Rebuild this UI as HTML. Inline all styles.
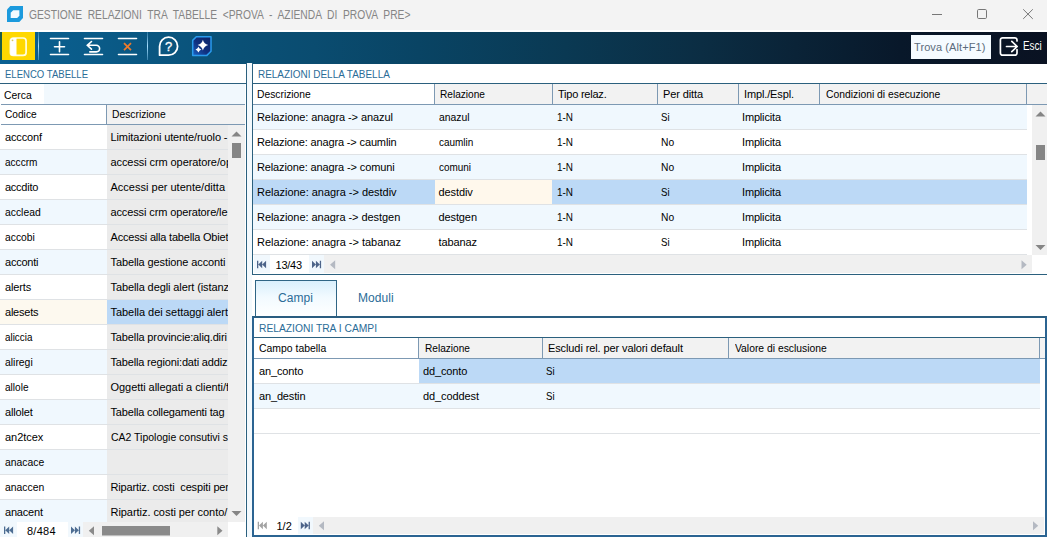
<!DOCTYPE html>
<html lang="it"><head><meta charset="utf-8"><title>GESTIONE RELAZIONI TRA TABELLE</title>
<style>
*{box-sizing:border-box;margin:0;padding:0}
html,body{width:1047px;height:537px;overflow:hidden;background:#fff}
body{position:relative;font-family:"Liberation Sans",sans-serif;font-size:11px;color:#000}
.a{position:absolute}
.t{position:absolute;white-space:pre;line-height:14px;height:14px;overflow:visible}
.hd{color:#2a6c97}
.c{position:absolute;overflow:hidden}
</style></head><body>

<div class="a" style="left:0px;top:0px;width:1047px;height:30px;background:#f3f3f3;"></div>
<svg class="a" style="left:0;top:0" width="30" height="30" viewBox="0 0 30 30"><path d="M10.3 6H23V18L19.300 22H7V9.600Z" fill="#1b9add"/><path d="M13.200 10.200H19.400V15.700L17.200 17.900H10.700V12.700Z" fill="#f2fbff"/></svg>
<div class="t " id="ttl" style="left:29px;top:7px;font-size:12px;line-height:16px;height:16px;color:#858585;transform:scaleX(0.855);transform-origin:0 0;word-spacing:3.3px">GESTIONE RELAZIONI TRA TABELLE &lt;PROVA - AZIENDA DI PROVA PRE&gt;</div>
<svg class="a" style="left:925px;top:4px" width="115" height="20" viewBox="0 0 115 20"><g stroke="#777" stroke-width="1" fill="none"><path d="M7 10.5H17"/><rect x="52.5" y="5.5" width="9" height="9" rx="1.2"/><path d="M98.200 5.300L107.800 14.900M107.800 5.300L98.200 14.900"/></g></svg>
<div class="a" style="left:0px;top:32px;width:1047px;height:32px;background:linear-gradient(to right,rgb(10,96,146) 0%,rgb(10,92,138) 8%,rgb(10,86,128) 15%,rgb(10,80,118) 23%,rgb(10,76,112) 30%,rgb(9,68,100) 40%,rgb(10,57,83) 54%,rgb(11,45,67) 67%,rgb(10,35,55) 76%,rgb(8,24,42) 86%,rgb(10,18,34) 100%);"></div>
<div class="a" style="left:0px;top:32px;width:2px;height:28px;background:#1d5c4a;"></div>
<div class="a" style="left:1.5px;top:32px;width:33px;height:28px;background:#ffd800;"></div>
<svg class="a" style="left:0;top:32px" width="230" height="32" viewBox="0 0 230 32">
<rect x="10.400" y="6" width="15.700" height="17.400" rx="3" fill="none" stroke="#fffde0" stroke-width="1.700"/>
<path d="M10.5 8.5a2.5 2.5 0 0 1 2.5-2.5H16.5V23.5H13a2.5 2.5 0 0 1-2.5-2.5Z" fill="#fff"/>
<circle cx="12.500" cy="8.300" r="0.900" fill="#d9c75a"/>
<defs><linearGradient id="sg" x1="0" y1="0" x2="0" y2="1"><stop offset="0" stop-color="#8fd2fb" stop-opacity="0.25"/><stop offset="0.5" stop-color="#a8e0ff" stop-opacity="1"/><stop offset="1" stop-color="#8fd2fb" stop-opacity="0.35"/></linearGradient></defs><rect x="38" y="0" width="1" height="28" fill="url(#sg)"/><rect x="147" y="0" width="1" height="28" fill="url(#sg)"/>
<g stroke="#fff" stroke-width="1.600" fill="none" stroke-linecap="round">
<path d="M50.5 6.5H68.5M50.5 22.5H68.5M54.5 14.7H64.5M59.5 9.7V19.7"/>
<path d="M84.5 6.5H102.5M84.5 22.5H102.5"/>
<path d="M91.500 9.500L87.300 13.300L91.500 17.100M87.600 13.300H96.300a3.300 3.300 0 0 1 0 6.600H89.800"/>
<path d="M118.5 6.5H136.5M118.5 22.5H136.5"/>
</g>
<path d="M124 11.200L131 18.200M131 11.200L124 18.200" stroke="#ee7a2c" stroke-width="1.700" fill="none"/>
<path d="M159.600 23.200V14.200a9 9 0 1 1 9 9Z" fill="none" stroke="#fff" stroke-width="1.800" stroke-linejoin="round"/>
<text x="168.6" y="19" text-anchor="middle" font-family="Liberation Sans, sans-serif" font-size="13" fill="#fff" stroke="#fff" stroke-width="0.300">?</text>
<linearGradient id="ng" x1="1" y1="0" x2="0" y2="1"><stop offset="0" stop-color="#0d2468"/><stop offset="0.55" stop-color="#10307f"/><stop offset="1" stop-color="#1b63c4"/></linearGradient><path d="M196.300 4.800H211V19.300L206.900 23.400H192.700V8.400Z" fill="url(#ng)" stroke="#2a9bee" stroke-width="1.500" stroke-linejoin="round"/>
<path d="M202.9 7.80Q204.0 12.0 208.20 13.1Q204.0 14.2 202.9 18.40Q201.8 14.2 197.60 13.1Q201.8 12.0 202.9 7.80Z" fill="#fff"/>
<path d="M198.4 14.70Q199.20000000000002 16.8 201.30 17.6Q199.20000000000002 18.400000000000002 198.4 20.50Q197.6 18.400000000000002 195.50 17.6Q197.6 16.8 198.4 14.70Z" fill="#fff"/>
</svg>
<div class="a" style="left:911px;top:35px;width:80px;height:24px;background:#f5fbff;"></div>
<div class="t " id="trova" style="left:914px;top:40px;letter-spacing:0.093px;color:#5b6b7c">Trova (Alt+F1)</div>
<svg class="a" style="left:996px;top:34px" width="26" height="26" viewBox="0 0 26 26"><g fill="none" stroke="#fff" stroke-width="1.700" stroke-linecap="round" stroke-linejoin="round"><path d="M21 7V6a2.200 2.200 0 0 0-2.200-2.200H6.600A2.200 2.200 0 0 0 4.400 6V19a2.200 2.200 0 0 0 2.200 2.200H18.800A2.200 2.200 0 0 0 21 19V15.500"/><path d="M10.500 12.500H20.800M15.800 7.300L21.200 12.500L15.800 17.700"/></g></svg>
<div class="t " id="esci" style="left:1023px;top:39px;transform:scaleX(0.8249);transform-origin:0 0;font-size:12px;color:#fff">Esci</div>
<div class="a" style="left:0px;top:64px;width:246px;height:473px;background:#fff;"></div>
<div class="t hd" id="lh" style="left:5px;top:67px;transform:scaleX(0.8684);transform-origin:0 0;">ELENCO TABELLE</div>
<div class="a" style="left:0px;top:83px;width:246px;height:1px;background:#2b607e;"></div>
<div class="a" style="left:0px;top:84px;width:245px;height:20px;background:#f1f8fd;"></div>
<div class="a" style="left:0px;top:84px;width:44px;height:20px;background:#fff;"></div>
<div class="t " id="cerca" style="left:4px;top:88px;transform:scaleX(0.9440);transform-origin:0 0;">Cerca</div>
<div class="a" style="left:1px;top:104px;width:244px;height:1px;background:#7d99b3;"></div>
<div class="a" style="left:2px;top:105px;width:104px;height:19px;background:#fff;"></div>
<div class="a" style="left:107px;top:105px;width:138px;height:19px;background:#f2f2f2;"></div>
<div class="a" style="left:106px;top:105px;width:1px;height:19px;background:#7d99b3;"></div>
<div class="a" style="left:1px;top:124px;width:244px;height:1px;background:#7d99b3;"></div>
<div class="t " style="left:5px;top:107px;transform:scaleX(0.9229);transform-origin:0 0;">Codice</div>
<div class="t " style="left:112px;top:107px;transform:scaleX(0.9362);transform-origin:0 0;">Descrizione</div>
<div class="a" style="left:0px;top:125px;width:107px;height:24px;background:#fff;"></div>
<div class="a" style="left:107px;top:125px;width:121px;height:24px;background:#ebebeb;"></div>
<div class="a" style="left:0px;top:149px;width:228px;height:1px;background:#dfe2e5;"></div>
<div class="t " style="left:5px;top:130px;letter-spacing:-0.135px;">accconf</div>
<div class="c" style="left:107px;top:125px;width:121px;height:24px">
<div class="t " style="left:3.5px;top:5px;letter-spacing:-0.114px;">Limitazioni utente/ruolo -</div>
</div>
<div class="a" style="left:0px;top:150px;width:107px;height:24px;background:#f0f8fe;"></div>
<div class="a" style="left:107px;top:150px;width:121px;height:24px;background:#ebebeb;"></div>
<div class="a" style="left:0px;top:174px;width:228px;height:1px;background:#dfe2e5;"></div>
<div class="t " style="left:5px;top:155px;transform:scaleX(0.9141);transform-origin:0 0;">acccrm</div>
<div class="c" style="left:107px;top:150px;width:121px;height:24px">
<div class="t " style="left:3.5px;top:5px;letter-spacing:-0.087px;">accessi crm operatore/op</div>
</div>
<div class="a" style="left:0px;top:175px;width:107px;height:24px;background:#fff;"></div>
<div class="a" style="left:107px;top:175px;width:121px;height:24px;background:#ebebeb;"></div>
<div class="a" style="left:0px;top:199px;width:228px;height:1px;background:#dfe2e5;"></div>
<div class="t " style="left:5px;top:180px;letter-spacing:-0.259px;">accdito</div>
<div class="c" style="left:107px;top:175px;width:121px;height:24px">
<div class="t " style="left:3.5px;top:5px;letter-spacing:0.007px;">Accessi per utente/ditta</div>
</div>
<div class="a" style="left:0px;top:200px;width:107px;height:24px;background:#f0f8fe;"></div>
<div class="a" style="left:107px;top:200px;width:121px;height:24px;background:#ebebeb;"></div>
<div class="a" style="left:0px;top:224px;width:228px;height:1px;background:#dfe2e5;"></div>
<div class="t " style="left:5px;top:205px;transform:scaleX(0.9416);transform-origin:0 0;">acclead</div>
<div class="c" style="left:107px;top:200px;width:121px;height:24px">
<div class="t " style="left:3.5px;top:5px;letter-spacing:-0.123px;">accessi crm operatore/le</div>
</div>
<div class="a" style="left:0px;top:225px;width:107px;height:24px;background:#fff;"></div>
<div class="a" style="left:107px;top:225px;width:121px;height:24px;background:#ebebeb;"></div>
<div class="a" style="left:0px;top:249px;width:228px;height:1px;background:#dfe2e5;"></div>
<div class="t " style="left:5px;top:230px;transform:scaleX(0.9372);transform-origin:0 0;">accobi</div>
<div class="c" style="left:107px;top:225px;width:121px;height:24px">
<div class="t " style="left:3.5px;top:5px;letter-spacing:-0.196px;">Accessi alla tabella Obiet</div>
</div>
<div class="a" style="left:0px;top:250px;width:107px;height:24px;background:#f0f8fe;"></div>
<div class="a" style="left:107px;top:250px;width:121px;height:24px;background:#ebebeb;"></div>
<div class="a" style="left:0px;top:274px;width:228px;height:1px;background:#dfe2e5;"></div>
<div class="t " style="left:5px;top:255px;letter-spacing:-0.226px;">acconti</div>
<div class="c" style="left:107px;top:250px;width:121px;height:24px">
<div class="t " style="left:3.5px;top:5px;letter-spacing:-0.105px;">Tabella gestione acconti</div>
</div>
<div class="a" style="left:0px;top:275px;width:107px;height:24px;background:#fff;"></div>
<div class="a" style="left:107px;top:275px;width:121px;height:24px;background:#ebebeb;"></div>
<div class="a" style="left:0px;top:299px;width:228px;height:1px;background:#dfe2e5;"></div>
<div class="t " style="left:5px;top:280px;letter-spacing:-0.12px;">alerts</div>
<div class="c" style="left:107px;top:275px;width:121px;height:24px">
<div class="t " style="left:3.5px;top:5px;letter-spacing:-0.099px;">Tabella degli alert (istanz</div>
</div>
<div class="a" style="left:0px;top:300px;width:107px;height:24px;background:#fdf9ef;"></div>
<div class="a" style="left:107px;top:300px;width:121px;height:24px;background:#bcd9f6;"></div>
<div class="a" style="left:0px;top:324px;width:228px;height:1px;background:#dfe2e5;"></div>
<div class="t " style="left:5px;top:305px;letter-spacing:-0.226px;">alesets</div>
<div class="c" style="left:107px;top:300px;width:121px;height:24px">
<div class="t " style="left:3.5px;top:5px;letter-spacing:-0.045px;">Tabella dei settaggi alert</div>
</div>
<div class="a" style="left:0px;top:325px;width:107px;height:24px;background:#fff;"></div>
<div class="a" style="left:107px;top:325px;width:121px;height:24px;background:#ebebeb;"></div>
<div class="a" style="left:0px;top:349px;width:228px;height:1px;background:#dfe2e5;"></div>
<div class="t " style="left:5px;top:330px;transform:scaleX(0.8964);transform-origin:0 0;">aliccia</div>
<div class="c" style="left:107px;top:325px;width:121px;height:24px">
<div class="t " style="left:3.5px;top:5px;letter-spacing:-0.132px;">Tabella provincie:aliq.diri</div>
</div>
<div class="a" style="left:0px;top:350px;width:107px;height:24px;background:#f0f8fe;"></div>
<div class="a" style="left:107px;top:350px;width:121px;height:24px;background:#ebebeb;"></div>
<div class="a" style="left:0px;top:374px;width:228px;height:1px;background:#dfe2e5;"></div>
<div class="t " style="left:5px;top:355px;transform:scaleX(0.9439);transform-origin:0 0;">aliregi</div>
<div class="c" style="left:107px;top:350px;width:121px;height:24px">
<div class="t " style="left:3.5px;top:5px;letter-spacing:-0.163px;">Tabella regioni:dati addiz</div>
</div>
<div class="a" style="left:0px;top:375px;width:107px;height:24px;background:#fff;"></div>
<div class="a" style="left:107px;top:375px;width:121px;height:24px;background:#ebebeb;"></div>
<div class="a" style="left:0px;top:399px;width:228px;height:1px;background:#dfe2e5;"></div>
<div class="t " style="left:5px;top:380px;transform:scaleX(0.9149);transform-origin:0 0;">allole</div>
<div class="c" style="left:107px;top:375px;width:121px;height:24px">
<div class="t " style="left:3.5px;top:5px;letter-spacing:-0.05px;">Oggetti allegati a clienti/f</div>
</div>
<div class="a" style="left:0px;top:400px;width:107px;height:24px;background:#f0f8fe;"></div>
<div class="a" style="left:107px;top:400px;width:121px;height:24px;background:#ebebeb;"></div>
<div class="a" style="left:0px;top:424px;width:228px;height:1px;background:#dfe2e5;"></div>
<div class="t " style="left:5px;top:405px;letter-spacing:-0.173px;">allolet</div>
<div class="c" style="left:107px;top:400px;width:121px;height:24px">
<div class="t " style="left:3.5px;top:5px;letter-spacing:-0.17px;">Tabella collegamenti tag</div>
</div>
<div class="a" style="left:0px;top:425px;width:107px;height:24px;background:#fff;"></div>
<div class="a" style="left:107px;top:425px;width:121px;height:24px;background:#ebebeb;"></div>
<div class="a" style="left:0px;top:449px;width:228px;height:1px;background:#dfe2e5;"></div>
<div class="t " style="left:5px;top:430px;letter-spacing:-0.038px;">an2tcex</div>
<div class="c" style="left:107px;top:425px;width:121px;height:24px">
<div class="t " style="left:3.5px;top:5px;transform:scaleX(0.9520);transform-origin:0 0;">CA2 Tipologie consutivi s</div>
</div>
<div class="a" style="left:0px;top:450px;width:107px;height:24px;background:#f0f8fe;"></div>
<div class="a" style="left:107px;top:450px;width:121px;height:24px;background:#ebebeb;"></div>
<div class="a" style="left:0px;top:474px;width:228px;height:1px;background:#dfe2e5;"></div>
<div class="t " style="left:5px;top:455px;transform:scaleX(0.9426);transform-origin:0 0;">anacace</div>
<div class="c" style="left:107px;top:450px;width:121px;height:24px">
<div class="t " style="left:3.5px;top:5px;"></div>
</div>
<div class="a" style="left:0px;top:475px;width:107px;height:24px;background:#fff;"></div>
<div class="a" style="left:107px;top:475px;width:121px;height:24px;background:#ebebeb;"></div>
<div class="a" style="left:0px;top:499px;width:228px;height:1px;background:#dfe2e5;"></div>
<div class="t " style="left:5px;top:480px;transform:scaleX(0.9426);transform-origin:0 0;">anaccen</div>
<div class="c" style="left:107px;top:475px;width:121px;height:24px">
<div class="t " style="left:3.5px;top:5px;letter-spacing:-0.139px;">Ripartiz. costi  cespiti per</div>
</div>
<div class="a" style="left:0px;top:500px;width:107px;height:24px;background:#f0f8fe;"></div>
<div class="a" style="left:107px;top:500px;width:121px;height:24px;background:#ebebeb;"></div>
<div class="a" style="left:0px;top:524px;width:228px;height:1px;background:#dfe2e5;"></div>
<div class="t " style="left:5px;top:505px;letter-spacing:-0.191px;">anacent</div>
<div class="c" style="left:107px;top:500px;width:121px;height:24px">
<div class="t " style="left:3.5px;top:5px;letter-spacing:-0.048px;">Ripartiz. costi per conto/</div>
</div>
<div class="a" style="left:228px;top:125px;width:17px;height:400px;background:#f0f0f0;"></div>
<svg class="a" style="left:228px;top:125px" width="17" height="400" viewBox="0 0 17 400"><path d="M3.5 11.5L8.5 6.5L13.5 11.5Z" fill="#858585"/><rect x="4" y="18" width="9" height="15" fill="#858585"/><path d="M3.5 386L8.500 391L13.5 386Z" fill="#858585"/></svg>
<div class="a" style="left:0px;top:522px;width:228px;height:15px;background:#f0f0f0;"></div>
<div class="a" style="left:228px;top:522px;width:17px;height:15px;background:#fff;"></div>
<div class="a" style="left:0px;top:522px;width:83px;height:15px;background:#f1f8fd;"></div>
<div class="a" style="left:17px;top:522px;width:51px;height:15px;background:#fff;"></div>
<svg class="a" style="left:0;top:0" width="1047" height="537" viewBox="0 0 1047 537"><path d="M4 526.6h1.300v7.500h-1.300zM9.2 526.6v7.500L5.3 530.35zM13.1 526.6v7.500L9.2 530.35z" fill="#4d6d92"/><path d="M78.8 526.6h1.300v7.500h-1.300zM74.9 526.6v7.500L78.8 530.35zM71 526.6v7.500L74.9 530.35z" fill="#4d6d92"/><path d="M94.0 526.3v9L88.8 530.8z" fill="#8a8a8a"/><path d="M217.3 526.3v9L222.5 530.8z" fill="#8a8a8a"/><rect x="102" y="526" width="68" height="9.500" fill="#8a8a8a"/></svg>
<div class="t " id="n1" style="left:27px;top:524px;letter-spacing:0.243px;">8/484</div>
<div class="a" style="left:246px;top:63px;width:1px;height:474px;background:#2b607e;"></div>
<div class="a" style="left:247px;top:63px;width:5px;height:474px;background:#f3f9fd;"></div>
<div class="a" style="left:252px;top:63px;width:1px;height:2px;background:#2b607e;"></div>
<div class="a" style="left:252px;top:64px;width:795px;height:211px;background:#fff;"></div>
<div class="a" style="left:252px;top:64px;width:1px;height:211px;background:#2b607e;"></div>
<div class="t hd" id="rh" style="left:258px;top:67px;transform:scaleX(0.9045);transform-origin:0 0;">RELAZIONI DELLA TABELLA</div>
<div class="a" style="left:253px;top:83px;width:794px;height:1px;background:#2b607e;"></div>
<div class="a" style="left:253px;top:84px;width:182px;height:20px;background:#fff;"></div>
<div class="a" style="left:435px;top:84px;width:592px;height:20px;background:#f2f2f2;"></div>
<div class="a" style="left:1027px;top:84px;width:20px;height:20px;background:#f2f2f2;"></div>
<div class="t " style="left:257px;top:87px;transform:scaleX(0.9362);transform-origin:0 0;">Descrizione</div>
<div class="a" style="left:434px;top:84px;width:1px;height:20px;background:#7d99b3;"></div>
<div class="t " style="left:440px;top:87px;transform:scaleX(0.9199);transform-origin:0 0;">Relazione</div>
<div class="a" style="left:552px;top:84px;width:1px;height:20px;background:#7d99b3;"></div>
<div class="t " style="left:558px;top:87px;letter-spacing:-0.224px;">Tipo relaz.</div>
<div class="a" style="left:657px;top:84px;width:1px;height:20px;background:#7d99b3;"></div>
<div class="t " style="left:663px;top:87px;letter-spacing:-0.108px;">Per ditta</div>
<div class="a" style="left:738px;top:84px;width:1px;height:20px;background:#7d99b3;"></div>
<div class="t " style="left:744px;top:87px;letter-spacing:-0.135px;">Impl./Espl.</div>
<div class="a" style="left:819px;top:84px;width:1px;height:20px;background:#7d99b3;"></div>
<div class="t " style="left:826px;top:87px;transform:scaleX(0.9393);transform-origin:0 0;">Condizioni di esecuzione</div>
<div class="a" style="left:1026px;top:84px;width:1px;height:20px;background:#7d99b3;"></div>
<div class="a" style="left:253px;top:104px;width:794px;height:1px;background:#7d99b3;"></div>
<div class="a" style="left:253px;top:105px;width:774px;height:24px;background:#f0f8fe;"></div>
<div class="a" style="left:253px;top:129px;width:774px;height:1px;background:#dfe2e5;"></div>
<div class="t " style="left:257px;top:110px;letter-spacing:-0.073px;">Relazione: anagra -&gt; anazul</div>
<div class="t " style="left:438.5px;top:110px;transform:scaleX(0.9440);transform-origin:0 0;">anazul</div>
<div class="t " style="left:557px;top:110px;transform:scaleX(0.9027);transform-origin:0 0;">1-N</div>
<div class="t " style="left:661px;top:110px;transform:scaleX(0.8793);transform-origin:0 0;">Si</div>
<div class="t " style="left:742px;top:110px;letter-spacing:-0.168px;">Implicita</div>
<div class="a" style="left:253px;top:130px;width:774px;height:24px;background:#fff;"></div>
<div class="a" style="left:253px;top:154px;width:774px;height:1px;background:#dfe2e5;"></div>
<div class="t " style="left:257px;top:135px;letter-spacing:-0.14px;">Relazione: anagra -&gt; caumlin</div>
<div class="t " style="left:438.5px;top:135px;transform:scaleX(0.9049);transform-origin:0 0;">caumlin</div>
<div class="t " style="left:557px;top:135px;transform:scaleX(0.9027);transform-origin:0 0;">1-N</div>
<div class="t " style="left:661px;top:135px;transform:scaleX(0.9316);transform-origin:0 0;">No</div>
<div class="t " style="left:742px;top:135px;letter-spacing:-0.168px;">Implicita</div>
<div class="a" style="left:253px;top:155px;width:774px;height:24px;background:#f0f8fe;"></div>
<div class="a" style="left:253px;top:179px;width:774px;height:1px;background:#dfe2e5;"></div>
<div class="t " style="left:257px;top:160px;letter-spacing:-0.129px;">Relazione: anagra -&gt; comuni</div>
<div class="t " style="left:438.5px;top:160px;transform:scaleX(0.9024);transform-origin:0 0;">comuni</div>
<div class="t " style="left:557px;top:160px;transform:scaleX(0.9027);transform-origin:0 0;">1-N</div>
<div class="t " style="left:661px;top:160px;transform:scaleX(0.9316);transform-origin:0 0;">No</div>
<div class="t " style="left:742px;top:160px;letter-spacing:-0.168px;">Implicita</div>
<div class="a" style="left:253px;top:180px;width:774px;height:24px;background:#bcd9f6;"></div>
<div class="a" style="left:435px;top:180px;width:117px;height:24px;background:#fff8ec;"></div>
<div class="a" style="left:253px;top:204px;width:774px;height:1px;background:#dfe2e5;"></div>
<div class="t " style="left:257px;top:185px;letter-spacing:-0.027px;">Relazione: anagra -&gt; destdiv</div>
<div class="t " style="left:438.5px;top:185px;letter-spacing:-0.092px;">destdiv</div>
<div class="t " style="left:557px;top:185px;transform:scaleX(0.9027);transform-origin:0 0;">1-N</div>
<div class="t " style="left:661px;top:185px;transform:scaleX(0.8793);transform-origin:0 0;">Si</div>
<div class="t " style="left:742px;top:185px;letter-spacing:-0.168px;">Implicita</div>
<div class="a" style="left:253px;top:205px;width:774px;height:24px;background:#f0f8fe;"></div>
<div class="a" style="left:253px;top:229px;width:774px;height:1px;background:#dfe2e5;"></div>
<div class="t " style="left:257px;top:210px;letter-spacing:-0.049px;">Relazione: anagra -&gt; destgen</div>
<div class="t " style="left:438.5px;top:210px;letter-spacing:-0.107px;">destgen</div>
<div class="t " style="left:557px;top:210px;transform:scaleX(0.9027);transform-origin:0 0;">1-N</div>
<div class="t " style="left:661px;top:210px;transform:scaleX(0.9316);transform-origin:0 0;">No</div>
<div class="t " style="left:742px;top:210px;letter-spacing:-0.168px;">Implicita</div>
<div class="a" style="left:253px;top:230px;width:774px;height:24px;background:#fff;"></div>
<div class="a" style="left:253px;top:254px;width:774px;height:1px;background:#dfe2e5;"></div>
<div class="t " style="left:257px;top:235px;letter-spacing:-0.027px;">Relazione: anagra -&gt; tabanaz</div>
<div class="t " style="left:438.5px;top:235px;letter-spacing:-0.107px;">tabanaz</div>
<div class="t " style="left:557px;top:235px;transform:scaleX(0.9027);transform-origin:0 0;">1-N</div>
<div class="t " style="left:661px;top:235px;transform:scaleX(0.8793);transform-origin:0 0;">Si</div>
<div class="t " style="left:742px;top:235px;letter-spacing:-0.168px;">Implicita</div>
<div class="a" style="left:1032px;top:105px;width:15px;height:150px;background:#f0f0f0;"></div>
<svg class="a" style="left:1032px;top:105px" width="15" height="150" viewBox="0 0 15 150"><path d="M3.5 11.5L8.500 6.5L13.5 11.5Z" fill="#858585"/><rect x="4" y="40" width="9" height="15" fill="#858585"/><path d="M3.5 140L8.500 145L13.5 140Z" fill="#858585"/></svg>
<div class="a" style="left:254px;top:255px;width:793px;height:18px;background:#f0f0f0;"></div>
<div class="a" style="left:254px;top:255px;width:70px;height:18px;background:#f1f8fd;"></div>
<div class="a" style="left:270px;top:255px;width:39px;height:18px;background:#fff;"></div>
<div class="a" style="left:1032px;top:255px;width:15px;height:18px;background:#fff;"></div>
<svg class="a" style="left:0;top:0" width="1047" height="537" viewBox="0 0 1047 537"><path d="M257 260.8h1.300v7.500h-1.300zM262.2 260.8v7.500L258.3 264.55zM266.1 260.8v7.500L262.2 264.55z" fill="#4d6489"/><path d="M319.8 260.8h1.300v7.500h-1.300zM315.9 260.8v7.500L319.8 264.55zM312 260.8v7.500L315.9 264.55z" fill="#4d6489"/><path d="M335.2 260.3v9L330 264.8z" fill="#b4b9c2"/><path d="M1021.5 260.3v9L1026.7 264.8z" fill="#b4b9c2"/></svg>
<div class="t " id="n2" style="left:275.5px;top:258px;letter-spacing:-0.232px;">13/43</div>
<div class="a" style="left:252px;top:274px;width:795px;height:1px;background:#2b607e;"></div>
<div class="a" style="left:255px;top:280px;width:82px;height:37px;background:linear-gradient(to bottom,#d9effc 0%,#f2faff 45%,#fff 100%);border:1px solid #2f6585;border-bottom:none"></div>
<div class="t hd" id="tab1" style="left:278px;top:290px;letter-spacing:0.081px;font-size:12px;line-height:16px;height:16px">Campi</div>
<div class="t hd" id="tab2" style="left:358px;top:290px;letter-spacing:0.07px;font-size:12px;line-height:16px;height:16px">Moduli</div>
<div class="a" style="left:252px;top:316px;width:795px;height:221px;background:#fff;border:2px solid #2b6492;border-top-color:#2a5d80"></div>
<div class="t hd" id="bh" style="left:259px;top:321px;transform:scaleX(0.9341);transform-origin:0 0;">RELAZIONI TRA I CAMPI</div>
<div class="a" style="left:254px;top:337px;width:791px;height:1px;background:#2b607e;"></div>
<div class="a" style="left:254px;top:338px;width:164px;height:20px;background:#fff;"></div>
<div class="a" style="left:419px;top:338px;width:621px;height:20px;background:#f2f2f2;"></div>
<div class="a" style="left:1040px;top:338px;width:5px;height:20px;background:#f3f3f3;"></div>
<div class="t " style="left:259px;top:341px;transform:scaleX(0.9474);transform-origin:0 0;">Campo tabella</div>
<div class="a" style="left:418px;top:338px;width:1px;height:20px;background:#7d99b3;"></div>
<div class="t " style="left:425px;top:341px;transform:scaleX(0.9199);transform-origin:0 0;">Relazione</div>
<div class="a" style="left:542px;top:338px;width:1px;height:20px;background:#7d99b3;"></div>
<div class="t " style="left:548px;top:341px;letter-spacing:-0.106px;">Escludi rel. per valori default</div>
<div class="a" style="left:728px;top:338px;width:1px;height:20px;background:#7d99b3;"></div>
<div class="t " style="left:735px;top:341px;transform:scaleX(0.9393);transform-origin:0 0;">Valore di esclusione</div>
<div class="a" style="left:1039px;top:338px;width:1px;height:20px;background:#7d99b3;"></div>
<div class="a" style="left:254px;top:358px;width:791px;height:1px;background:#7d99b3;"></div>
<div class="a" style="left:254px;top:359px;width:165px;height:24px;background:#fff;"></div>
<div class="a" style="left:419px;top:359px;width:621px;height:24px;background:#bcd9f6;"></div>
<div class="a" style="left:254px;top:383px;width:786px;height:1px;background:#dfe2e5;"></div>
<div class="a" style="left:254px;top:384px;width:786px;height:24px;background:#f0f8fe;"></div>
<div class="a" style="left:254px;top:408px;width:786px;height:1px;background:#dfe2e5;"></div>
<div class="a" style="left:254px;top:433px;width:786px;height:1px;background:#dfe2e5;"></div>
<div class="t " style="left:259px;top:364px;letter-spacing:-0.123px;">an_conto</div>
<div class="t " style="left:423px;top:364px;letter-spacing:-0.123px;">dd_conto</div>
<div class="t " style="left:546px;top:364px;transform:scaleX(0.8793);transform-origin:0 0;">Si</div>
<div class="t " style="left:259px;top:389px;letter-spacing:-0.151px;">an_destin</div>
<div class="t " style="left:423px;top:389px;letter-spacing:-0.098px;">dd_coddest</div>
<div class="t " style="left:546px;top:389px;transform:scaleX(0.8793);transform-origin:0 0;">Si</div>
<div class="a" style="left:254px;top:517px;width:790px;height:17px;background:#f0f0f0;"></div>
<div class="a" style="left:254px;top:517px;width:59px;height:17px;background:#fff;"></div>
<div class="a" style="left:298px;top:517px;width:15px;height:17px;background:#f1f8fd;"></div>
<svg class="a" style="left:0;top:0" width="1047" height="537" viewBox="0 0 1047 537"><path d="M257.7 521.8h1.300v7.500h-1.300zM262.9 521.8v7.500L259.0 525.55zM266.8 521.8v7.500L262.9 525.55z" fill="#a3a3a3"/><path d="M308.6 521.8h1.300v7.500h-1.300zM304.7 521.8v7.500L308.6 525.55zM300.8 521.8v7.500L304.7 525.55z" fill="#4d6489"/><path d="M324.0 521.3v9L318.8 525.8z" fill="#b4b9c2"/><path d="M1033 521.3v9L1038.2 525.8z" fill="#b4b9c2"/></svg>
<div class="t " id="n3" style="left:276.5px;top:519px;letter-spacing:0.004px;">1/2</div>
</body></html>
